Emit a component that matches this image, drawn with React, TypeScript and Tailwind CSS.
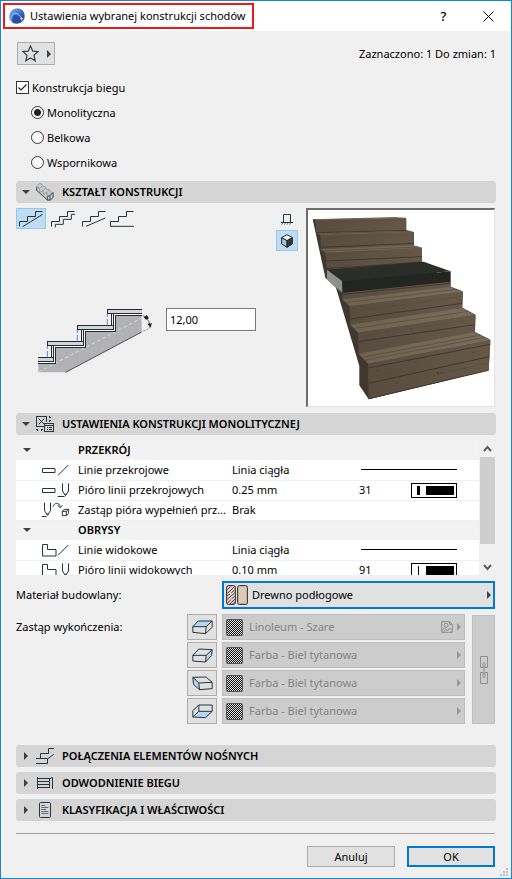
import { useState, type ReactNode } from "react";

const STRUCTURES = ["Monolityczna", "Belkowa", "Wspornikowa"];

type Row = {
  icon: ReactNode;
  label: string;
  value: string;
  line?: boolean;
  pen?: number;
  thick?: boolean;
};

const CUT_ROWS: Row[] = [
  { icon: <CutLineIcon />, label: "Linie przekrojowe", value: "Linia ciągła", line: true },
  { icon: <CutPenIcon />, label: "Pióro linii przekrojowych", value: "0.25 mm", pen: 31, thick: true },
  { icon: <OverridePenIcon />, label: "Zastąp pióra wypełnień prz...", value: "Brak" },
];

const OUTLINE_ROWS: Row[] = [
  { icon: <ViewLineIcon />, label: "Linie widokowe", value: "Linia ciągła", line: true },
  { icon: <ViewPenIcon />, label: "Pióro linii widokowych", value: "0.10 mm", pen: 91 },
];

const FINISHES = [
  { face: "top", title: "Góra", name: "Linoleum - Szare", texture: true },
  { face: "right", title: "Bok prawy", name: "Farba - Biel tytanowa" },
  { face: "left", title: "Bok lewy", name: "Farba - Biel tytanowa" },
  { face: "bottom", title: "Spód", name: "Farba - Biel tytanowa" },
];

export default function App() {
  const [enabled, setEnabled] = useState(true);
  const [structure, setStructure] = useState(STRUCTURES[0]);
  return (
    <div className="min-h-screen flex flex-col border border-[#1883d7] bg-[#f0f0f0] font-['Noto_Sans','Open_Sans',sans-serif] text-[11px] leading-4 text-black">
      <TitleBar />

      <main className="flex-1 flex flex-col px-[15px] pt-[11px]">
        <div className="flex items-center justify-between">
          <button
            aria-label="Ulubione"
            className="ml-px flex h-[23px] w-[38px] items-center justify-center gap-2 border border-[#adadad] bg-[#e1e1e1]"
          >
            <StarIcon />
            <Arrow dir="right" />
          </button>
          <span>Zaznaczono: 1 Do zmian: 1</span>
        </div>

        <fieldset className="mt-[10px]">
          <label className="flex h-[25px] items-center gap-[3px]">
            <span className="grid size-[13px]">
              <input
                type="checkbox"
                checked={enabled}
                onChange={(e) => setEnabled(e.target.checked)}
                className="[grid-area:1/1] size-[13px] appearance-none border border-[#333] bg-white"
              />
              {enabled && (
                <svg viewBox="0 0 13 13" className="[grid-area:1/1] pointer-events-none size-[13px]">
                  <path d="M2.5 6.5 5 9l5.5-5.5" fill="none" stroke="#222" strokeWidth="1.2" />
                </svg>
              )}
            </span>
            Konstrukcja biegu
          </label>
          {STRUCTURES.map((s) => (
            <label key={s} className="flex h-[25px] items-center gap-[3px] pl-[15px]">
              <input
                type="radio"
                name="structure"
                checked={structure === s}
                onChange={() => setStructure(s)}
                className="size-[13px] appearance-none rounded-full border border-[#333] bg-white checked:bg-[radial-gradient(circle,#222_3px,#fff_4px)]"
              />
              {s}
            </label>
          ))}
        </fieldset>

        <div className="mt-[6px]">
          <SectionHeader open icon={<StepsIcon />} title="KSZTAŁT KONSTRUKCJI" />
        </div>
        <ShapePanel />

        <SectionHeader open icon={<SettingsIcon />} title="USTAWIENIA KONSTRUKCJI MONOLITYCZNEJ" />
        <SettingsTable />
        <Materials />

        <div className="mt-[21px] flex flex-col gap-[5px]">
          <SectionHeader icon={<ConnectionsIcon />} title="POŁĄCZENIA ELEMENTÓW NOŚNYCH" />
          <SectionHeader icon={<DrainageIcon />} title="ODWODNIENIE BIEGU" />
          <SectionHeader icon={<DocumentIcon />} title="KLASYFIKACJA I WŁAŚCIWOŚCI" />
        </div>

        <hr className="mt-3 mr-px border-[#a0a0a0]" />
        <div className="mt-3 mr-px flex justify-end gap-3">
          <button className="h-[21px] w-[88px] border border-[#adadad] bg-[#e1e1e1]">Anuluj</button>
          <button className="h-[21px] w-[88px] border-2 border-[#0078d7] bg-[#e1e1e1]">OK</button>
        </div>
      </main>
      <div className="flex justify-end pr-[3px] pb-[2px]">
        <svg viewBox="0 0 8 8" className="size-2" fill="#bfbfbf">
          <path d="M6 0h2v2H6zM3 3h2v2H3zM6 3h2v2H6zM0 6h2v2H0zM3 6h2v2H3zM6 6h2v2H6z" />
        </svg>
      </div>
    </div>
  );
}

function TitleBar() {
  return (
    <header className="flex h-[30px] items-center bg-white pl-[2px]">
      <div className="flex h-[26px] items-center gap-[5px] border-2 border-[#f01818] pr-[7px] pl-1">
        <LogoIcon />
        <h1>Ustawienia wybranej konstrukcji schodów</h1>
      </div>
      <div className="ml-auto flex">
        <button aria-label="Pomoc" className="w-[45px] text-center text-[13px] font-medium">
          ?
        </button>
        <button aria-label="Zamknij" className="flex w-[45px] items-center justify-center">
          <svg viewBox="0 0 11 11" className="size-[11px]" stroke="#000" strokeWidth="1">
            <path d="M.5.5l10 10M10.5.5l-10 10" />
          </svg>
        </button>
      </div>
    </header>
  );
}

function SectionHeader({ open, icon, title }: { open?: boolean; icon: ReactNode; title: string }) {
  return (
    <button
      aria-expanded={!!open}
      className="flex h-[22px] w-full items-center rounded-[3px] bg-[#d5d5d5] text-left"
    >
      <span className="flex w-5 justify-center">
        <Arrow dir={open ? "down" : "right"} />
      </span>
      <span className="flex w-[26px] justify-start">{icon}</span>
      <span className="font-semibold">{title}</span>
    </button>
  );
}

function ShapePanel() {
  return (
    <div className="flex pt-[5px] pb-[6px]">
      <div className="flex-1">
        <div className="flex items-center">
          <button
            aria-label="Gładkie"
            className="flex h-[21px] w-[30px] items-center justify-center border border-[#90c8f6] bg-[#c0dcf3]"
          >
            <ShapeIcon under="M11 50 71 13" />
          </button>
          <button aria-label="Schodkowe" className="ml-[5px] w-6">
            <ShapeIcon under="M13 52V43H37V28H61V13H72" />
          </button>
          <button aria-label="Odsunięte" className="ml-[7px] w-6">
            <ShapeIcon under="M12 49 70 24" />
          </button>
          <button aria-label="Proste" className="ml-1 w-6">
            <ShapeIcon under="M2 49H72" />
          </button>
        </div>
        <div className="mt-[79px] flex items-start gap-[13px] pl-[21px]">
          <SlabDiagram />
          <input
            aria-label="Grubość konstrukcji"
            defaultValue="12,00"
            className="h-[23px] w-[90px] border border-[#7a7a7a] bg-white px-[3px]"
          />
        </div>
      </div>
      <div className="flex w-[30px] flex-col">
        <button aria-label="Widok 2D" className="flex h-[22px] w-[22px] items-center justify-center">
          <FrontViewIcon />
        </button>
        <button
          aria-label="Widok 3D"
          className="flex h-[21px] w-[22px] items-center justify-center border border-[#90c8f6] bg-[#c0dcf3]"
        >
          <CubeIcon />
        </button>
      </div>
      <div className="mr-px h-[199px] w-[189px] border-t-2 border-l-2 border-r border-b border-t-[#6d6d6d] border-l-[#6d6d6d] border-r-[#e3e3e3] border-b-[#e3e3e3] bg-white">
        <StairsPreview />
      </div>
    </div>
  );
}

function SettingsTable() {
  return (
    <div className="mt-[5px] mr-px flex h-[135px]">
      <div className="min-w-0 flex-1 overflow-hidden bg-white">
        <table className="w-full table-fixed border-collapse">
          <colgroup>
            <col className="w-[62px]" />
            <col className="w-[154px]" />
            <col className="w-[127px]" />
            <col />
          </colgroup>
          <GroupRows title="PRZEKRÓJ" rows={CUT_ROWS} />
          <GroupRows title="OBRYSY" rows={OUTLINE_ROWS} />
        </table>
      </div>
      <div className="flex w-4 flex-col items-center pl-px">
        <button aria-label="W górę" className="flex h-[17px] items-center">
          <Chevron d="M1 6 4.500 2 8 6" />
        </button>
        <div className="h-[87px] w-full bg-[#cdcdcd]" />
        <button aria-label="W dół" className="mt-auto flex h-[17px] items-center">
          <Chevron d="M1 2 4.500 6 8 2" />
        </button>
      </div>
    </div>
  );
}

function GroupRows({ title, rows }: { title: string; rows: Row[] }) {
  return (
    <tbody>
      <tr className="h-5 bg-[#f2f2f2]">
        <td className="pl-[7px]">
          <Arrow dir="down" />
        </td>
        <th colSpan={3} className="text-left font-semibold">
          {title}
        </th>
      </tr>
      {rows.map((r) => (
        <tr key={r.label} className="h-5 border-b border-[#f0f0f0]">
          <td className="pl-[25px]">{r.icon}</td>
          <td className="whitespace-nowrap">{r.label}</td>
          <td>{r.value}</td>
          <td className="pr-[22px]">
            {r.line && <div className="ml-[2px] h-px bg-black" />}
            {r.pen && (
              <div className="flex items-center justify-between">
                <span>{r.pen}</span>
                <span className="flex h-[15px] w-[46px] items-center justify-between border border-black pr-[2px] pl-[5px]">
                  <span className={r.thick ? "h-[9px] w-[3px] bg-black" : "ml-px h-[9px] w-px bg-black"} />
                  <span className="h-[9px] w-7 bg-black" />
                </span>
              </div>
            )}
          </td>
        </tr>
      ))}
    </tbody>
  );
}

function Materials() {
  return (
    <div className="mt-[6px] mr-px">
      <div className="flex items-center">
        <label htmlFor="material" className="w-[206px]">
          Materiał budowlany:
        </label>
        <div className="grid flex-1 items-center">
          <select
            id="material"
            className="[grid-area:1/1] h-7 w-full appearance-none border-2 border-[#0078d7] bg-[#e1e1e1] pl-7"
          >
            <option>Drewno podłogowe</option>
          </select>
          <span className="[grid-area:1/1] pointer-events-none flex items-center justify-between pr-1 pl-1">
            <MaterialSwatch />
            <Arrow dir="right" />
          </span>
        </div>
      </div>
      <div className="mt-[5px] flex">
        <span className="w-[171px] pt-[5px]">Zastąp wykończenia:</span>
        <div className="flex flex-1 flex-col gap-[2px]">
          {FINISHES.map((f) => (
            <div key={f.face} className="flex gap-[5px]">
              <button
                aria-label={f.title}
                className="flex h-[26px] w-[30px] items-center justify-center border border-[#adadad] bg-[#e1e1e1]"
              >
                <FaceIcon face={f.face} />
              </button>
              <div className="grid flex-1 items-center">
                <select
                  disabled
                  aria-label={f.title + " - wykończenie"}
                  className="[grid-area:1/1] h-[26px] w-full appearance-none border border-[#bfbfbf] bg-[#ccc] pl-[26px] text-[#838383] opacity-100"
                >
                  <option>{f.name}</option>
                </select>
                <span className="[grid-area:1/1] pointer-events-none flex items-center gap-1 pr-1 pl-1 text-[#999]">
                  <HatchSwatch />
                  <span className="flex-1" />
                  {f.texture && <TextureIcon />}
                  <Arrow dir="right" muted />
                </span>
              </div>
            </div>
          ))}
        </div>
        <button
          disabled
          aria-label="Połącz wykończenia"
          className="mt-px ml-[7px] flex w-[23px] items-center justify-center border border-[#bfbfbf] bg-[#ccc]"
        >
          <LinkIcon />
        </button>
      </div>
    </div>
  );
}

function Arrow({ dir, muted }: { dir: "right" | "down"; muted?: boolean }) {
  const fill = muted ? "#999" : "#404040";
  return dir === "down" ? (
    <svg viewBox="0 0 8 4" className="h-1 w-2 shrink-0">
      <path d="M0 0h8L4 4z" fill={fill} />
    </svg>
  ) : (
    <svg viewBox="0 0 4 8" className="h-2 w-1 shrink-0">
      <path d="M0 0v8l4-4z" fill={fill} />
    </svg>
  );
}

function Chevron({ d }: { d: string }) {
  return (
    <svg viewBox="0 0 9 8" className="h-2 w-[9px]">
      <path d={d} fill="none" stroke="#606060" strokeWidth="2" />
    </svg>
  );
}

function LogoIcon() {
  return (
    <svg viewBox="0 0 48 48" className="size-4">
      <defs>
        <linearGradient id="logo" x1="0" y1="0" x2="1" y2="1">
          <stop offset="0" stopColor="#7db4f0" />
          <stop offset=".5" stopColor="#3f6fd0" />
          <stop offset="1" stopColor="#1c2f78" />
        </linearGradient>
      </defs>
      <path
        d="M2 34C-2 14 11 1 25 1c13 0 22 10 22 23 0 8-4 15-10 19H12c-2 0-4-1-5-3-3-1-4-3-5-6Z"
        fill="url(#logo)"
      />
      <path d="M11 44C8 30 13 21 20 21c9 0 15 9 17 22-7 5-19 5-26 1Z" fill="#2c4fa8" />
      <path d="M6 40C4 24 12 15 21 16c9 2 15 10 18 22" fill="none" stroke="#c9dcfa" strokeWidth="2" />
      <path d="M36 30l2-4 2 4 4 2-4 2-2 4-2-4-3-2z" fill="#dbe8ff" opacity=".8" />
    </svg>
  );
}

function StarIcon() {
  return (
    <svg viewBox="0 0 17 17" className="size-[17px]">
      <path
        d="M8.500 1l2.200 5.100 5.300.5-4 3.600 1.200 5.600-4.700-2.900-4.700 2.900L5 10.200 1 6.600l5.300-.5z"
        fill="none"
        stroke="#37434a"
        strokeWidth="1.200"
      />
    </svg>
  );
}

function StepsIcon() {
  return (
    <svg viewBox="0 0 54 54" className="size-[18px]" strokeWidth="2.500" strokeLinejoin="round">
      <path d="M2 22V9L9 2l9 1 3 8 8 0 3 9 8-1 4 8 8 2v14l-9 9h-7Z" fill="#c8cbcd" stroke="#9a9ea0" />
      <path d="M2 11l8 5 8-7M10 16l2 12 9-5 8-7M21 23l2 11 9-5 7-6M32 29l2 10 7-4 9-6" fill="none" stroke="#8f9497" />
      <path d="M2 22 34 51h9l8-8V29l-9 9v13M2 22V12M34 51V41l8-3" fill="none" stroke="#3a4448" />
    </svg>
  );
}

function SettingsIcon() {
  return (
    <svg viewBox="0 0 54 48" className="h-4 w-[18px]" fill="none" stroke="#2c383e" strokeWidth="3">
      <g shapeRendering="crispEdges">
        <path d="M25 32H2V2h30v17M26 23h27v23H26zM26 28h27M32 34h3M38 34h10M32 40h3M38 40h10" />
        <path d="M41 0v7M38 5h6M41 12v6M38 13h6M4 38v6M1 41h6M17 38v6M14 41h6" />
      </g>
      <path d="M8 8l17 17M25 8 8 25" />
    </svg>
  );
}

function ShapeIcon({ under }: { under: string }) {
  return (
    <svg viewBox="0 0 72 54" className="h-[18px] w-6" fill="none" stroke="#26353c" strokeWidth="3">
      <path d="M1.500 49.500V34.500H25.500V19.500H49.500V4.500H70.500" />
      <path d={under} />
    </svg>
  );
}

function FrontViewIcon() {
  return (
    <svg viewBox="0 0 36 33" className="h-[11px] w-3" fill="none" stroke="#26353c" strokeWidth="3">
      <path d="M7.500 24V1.500h21V24M0 25.500h36" />
      <path d="M2 32l4-6M10 32l4-6M18 32l4-6M26 32l4-6" strokeWidth="2" />
    </svg>
  );
}

function CubeIcon() {
  return (
    <svg viewBox="0 0 36 42" className="h-[14px] w-3" stroke="#1d2b33" strokeWidth="3" strokeLinejoin="round">
      <path d="M18 2 34 11 18 20 2 11z" fill="#f4f9fd" />
      <path d="M2 11 18 20V40L2 30z" fill="#a9c3d8" />
      <path d="M34 11 18 20V40L34 30z" fill="#2c3b45" />
    </svg>
  );
}

// One unit is a third of a pixel, so the outlines can sit between pixels.
function SlabDiagram() {
  return (
    <svg viewBox="111 54 348 198" className="h-[66px] w-[116px]" fill="none">
      <path d="M115 219H166V171H256V123H346V75H425V126L197 247H115Z" fill="#b2b1b6" />
      <path d="M116 246 425 84" stroke="#ddd" strokeWidth="3" strokeDasharray="10 8" />
      <path d="M197 247 425 126" stroke="#4a4f54" strokeWidth="3" />
      <g stroke="#4a86f0" strokeWidth="3" strokeDasharray="17 6">
        <path d="M142 200V167M232 152V119M322 104V71" />
      </g>
      <path d="M115 217H163V169H253V121H343V73H426" stroke="#fff" strokeWidth="4" />
      <g stroke="#222d33" strokeWidth="3" shapeRendering="crispEdges">
        <path d="M114 202H160V214H114" fill="#d4d4d4" />
        <path d="M142 154H251V166H142Z" fill="#d4d4d4" />
        <path d="M232 106H341V118H232Z" fill="#d4d4d4" />
        <path d="M426 58H322V70H426" fill="#d4d4d4" />
        <path d="M154 166V202M160 166V214M244 118V154M250 118V166M334 70V106M340 70V118" />
        <path d="M114 220H166V172H256V124H346V76H426" />
      </g>
      <path d="M428 77 436 80M430 123q15-4 23-14" stroke="#777" strokeWidth="3" strokeDasharray="6 4" />
      <path d="M438 84q11 9 11 20" stroke="#222" strokeWidth="2" />
      <path d="M431 82l9-7 7 10-9 4zM442 101l14-1-5 13z" fill="#222" />
    </svg>
  );
}

function StairsPreview() {
  return (
    <svg viewBox="113 29 561 591" className="h-[197px] w-[187px]">
      <defs>
        <linearGradient id="riser" x1="0" y1="0" x2="1" y2="0">
          <stop offset="0" stopColor="#574c3e" />
          <stop offset="1" stopColor="#655848" />
        </linearGradient>
        <linearGradient id="tread" x1="0" y1="0" x2="1" y2="0">
          <stop offset="0" stopColor="#6f6251" />
          <stop offset="1" stopColor="#7a6c5a" />
        </linearGradient>
      </defs>
      {/* stringer side, in shadow; also backs the seams between the steps */}
      <path
        d="M127 57 407 53 430 96 455 143V187L540 243 577 274 615 344 660 420 655 510 295 597 267 555V497L197 262 165 232Z"
        fill="#40372e"
      />
      <path d="M408 50V90L431 95V50ZM431 95V136L456 142V90ZM541 210V259L578 273V210ZM576 322 616 343V270H578ZM614 395 662 419V340H616Z" fill="#fff" />
      <g fill="url(#riser)">
        <path d="M136 59 407 52V91L137 97Z" />
        <path d="M150 105 430 96V137L152 150Z" />
        <path d="M165 157 455 143V187L170 208Z" />
        <path d="M216 277 540 243V262L216 297Z" />
        <path d="M238 318 577 274 575 325 240 375Z" />
        <path d="M263 397 615 344 613 397 265 462Z" />
        <path d="M293 490 660 420 655 510 295 597Z" />
      </g>
      <g fill="url(#tread)">
        <path d="M127 57 375 50 407 53 136 60Z" />
        <path d="M137 97 407 89 430 96 150 105Z" />
        <path d="M152 147 430 135 455 143 165 157Z" />
        <path d="M216 297 540 260 577 274 238 318Z" />
        <path d="M240 373 575 323 615 344 263 397Z" />
        <path d="M265 460 613 395 660 420 293 490Z" />
      </g>
      <g fill="none" stroke="#3c332a" strokeWidth="2.500">
        <path d="M137 97 407 90M152 141 430 129M168 182 455 169M168 205 455 185M216 282 540 249" />
        <path d="M240 356 575 309M263 424 614 373M293 503 660 432M294 549 657 469M295 595 655 510" />
      </g>
      <g fill="none" stroke="#54493c" strokeWidth="2">
        <path d="M226 307 560 267M250 385 595 333M275 471 630 404M284 480 645 411M145 101 420 93M158 152 445 140" />
        <path d="M137 66 407 60M152 113 430 103M240 335 576 288M265 408 600 358M300 530 420 505M470 528 650 489" opacity=".5" />
      </g>
      <g fill="#40362c">
        <circle cx="421" cy="386" r="2" />
        <circle cx="502" cy="519" r="3" />
        <circle cx="514" cy="516" r="2" />
        <circle cx="320" cy="511" r="2" />
        <circle cx="610" cy="455" r="2" />
        <circle cx="380" cy="549" r="2" />
        <circle cx="360" cy="340" r="2" />
      </g>
      <path d="M170 208 460 184 541 213 215 242Z" fill="#2b2d28" />
      <path d="M215 242 541 213V244L216 277Z" fill="#232520" />
      <path d="M170 208 215 242 216 277 170 238Z" fill="#8f8f8f" />
    </svg>
  );
}

function RowIcon({ children }: { children: ReactNode }) {
  return (
    <svg viewBox="0 0 84 48" className="h-4 w-7" fill="none" stroke="#26353c" strokeWidth="3">
      {children}
    </svg>
  );
}

function CutLineIcon() {
  return (
    <RowIcon>
      <path d="M4.500 19.500h37.500v12H4.500zM51 40 82 9" />
    </RowIcon>
  );
}

function CutPenIcon() {
  return (
    <RowIcon>
      <path d="M4.500 19.500h37.500v12H4.500zM64.500 4v23l9 14 9-14V4M50 43.500h21M70 37h7" />
    </RowIcon>
  );
}

function OverridePenIcon() {
  return (
    <RowIcon>
      <path d="M10.500 2v24l9 14 9-14V2M2 43.500h15M16 36h7" />
      <path d="M36 14C40 1 54 0 58 14M50 10l8 7 6-7" />
      <path d="M64 28h12v13H64zM64 28l6-6h13v13l-7 6M76 28l7-6" />
    </RowIcon>
  );
}

function ViewLineIcon() {
  return (
    <RowIcon>
      <path d="M4.500 7.500h15v15h25.500v19.500H4.500zM51 40 82 9" />
    </RowIcon>
  );
}

function ViewPenIcon() {
  return (
    <RowIcon>
      <path d="M4.500 7.500h15v15h25.500v19.500H4.500zM64.500 4v23l9 14 9-14V4M50 43.500h21M70 37h7" />
    </RowIcon>
  );
}

function MaterialSwatch() {
  return (
    <svg viewBox="0 0 66 60" className="h-5 w-[22px]" stroke="#222" strokeWidth="3">
      <rect x="2" y="2" width="26" height="56" rx="5" fill="#f0d3cc" />
      <path
        d="M4 14 14 4M4 25 26 5M4 32l8-5M16 23l10-8M4 43l10-9 12-10M5 54l9-10M17 41l9-7M12 56l14-13M20 57l6-6"
        fill="none"
        strokeWidth="2.500"
      />
      <rect x="35" y="2" width="29" height="56" rx="5" fill="#dccbb4" />
    </svg>
  );
}

function HatchSwatch() {
  return (
    <svg viewBox="0 0 17 17" className="size-[17px]">
      <defs>
        <pattern id="hatch" width="2" height="2" patternUnits="userSpaceOnUse">
          <rect width="2" height="2" fill="#e4e4e4" />
          <path d="M0 0h1v1H0zM1 1h1v1H1z" fill="#111" />
        </pattern>
      </defs>
      <rect x=".5" y=".5" width="16" height="16" rx="1" fill="url(#hatch)" stroke="#555" />
    </svg>
  );
}

const FACES: Record<string, { fill: string; lines: string }> = {
  top: { fill: "M18 6H60L42 23H2Z", lines: "M2 23 18 6H60L42 23ZM2 23V40L40 44 42 23M40 44 60 25V6" },
  right: { fill: "M42 25 60 8 58 26 40 45Z", lines: "M2 25 20 6 60 8 42 25ZM2 25V42L40 45 42 25M40 45 58 26 60 8" },
  left: { fill: "M2 7 20 22 22 44 4 28Z", lines: "M2 7 42 6 60 22 20 24ZM2 7 4 28 22 44 20 24M22 44 60 41V22" },
  bottom: { fill: "M2 42 20 25H60L40 44Z", lines: "M20 6H60V25L40 44 2 42V23ZM20 6V25L2 42M20 25H60" },
};

function FaceIcon({ face }: { face: string }) {
  const { fill, lines } = FACES[face];
  return (
    <svg viewBox="0 0 62 48" className="h-4 w-[21px]" strokeLinejoin="round">
      <path d={fill} fill="#b5d6fb" />
      <path d={lines} fill="none" stroke="#26353c" strokeWidth="3" />
    </svg>
  );
}

function TextureIcon() {
  return (
    <svg viewBox="0 0 36 36" className="size-3" fill="none" stroke="#8f8f8f" strokeWidth="3">
      <path d="M26 2H2v32h32V10zM26 2v8h8" />
      <circle cx="15" cy="13" r="6" />
      <path d="M3 28l9-7 7 9 7-9 8 9M8 33l4-5" />
    </svg>
  );
}

function LinkIcon() {
  return (
    <svg viewBox="0 0 24 84" className="h-7 w-2" fill="none" stroke="#8f8f8f" strokeWidth="3">
      <path d="M9 34.500H1.500V1.500h21v33H16M9 49.500H1.500v33h21v-33H16" />
      <path d="M9 36V22q3-5 6 0v14M9 48v14q3 5 6 0V48M12 30v24" />
    </svg>
  );
}

function ConnectionsIcon() {
  return (
    <svg viewBox="0 0 54 48" className="h-4 w-[18px]" fill="none" stroke="#26353c" strokeWidth="3">
      <path d="M54 1.500H37.500V16.500H13.500V31.500M0 46.500H34.500V33L53 19M0 31.500H35" />
    </svg>
  );
}

function DrainageIcon() {
  return (
    <svg viewBox="0 0 54 48" className="h-4 w-[18px]" fill="none" stroke="#26353c" strokeWidth="3">
      <path d="M4.500 6v36M4.500 10.500h39M4.500 19.500h36M4.500 28.500h36M4.500 37.500h36M40.500 10v29M41 11l8.500-3.500V42" />
    </svg>
  );
}

function DocumentIcon() {
  return (
    <svg viewBox="0 0 54 48" className="h-4 w-[18px]" fill="none" stroke="#26353c" strokeWidth="3">
      <rect x="10.500" y="1.500" width="33" height="45" rx="3" />
      <path d="M16 10.500h11M16 16.500h21M16 22.500h14M16 28.500h21M16 34.500h21" strokeWidth="2" />
    </svg>
  );
}
